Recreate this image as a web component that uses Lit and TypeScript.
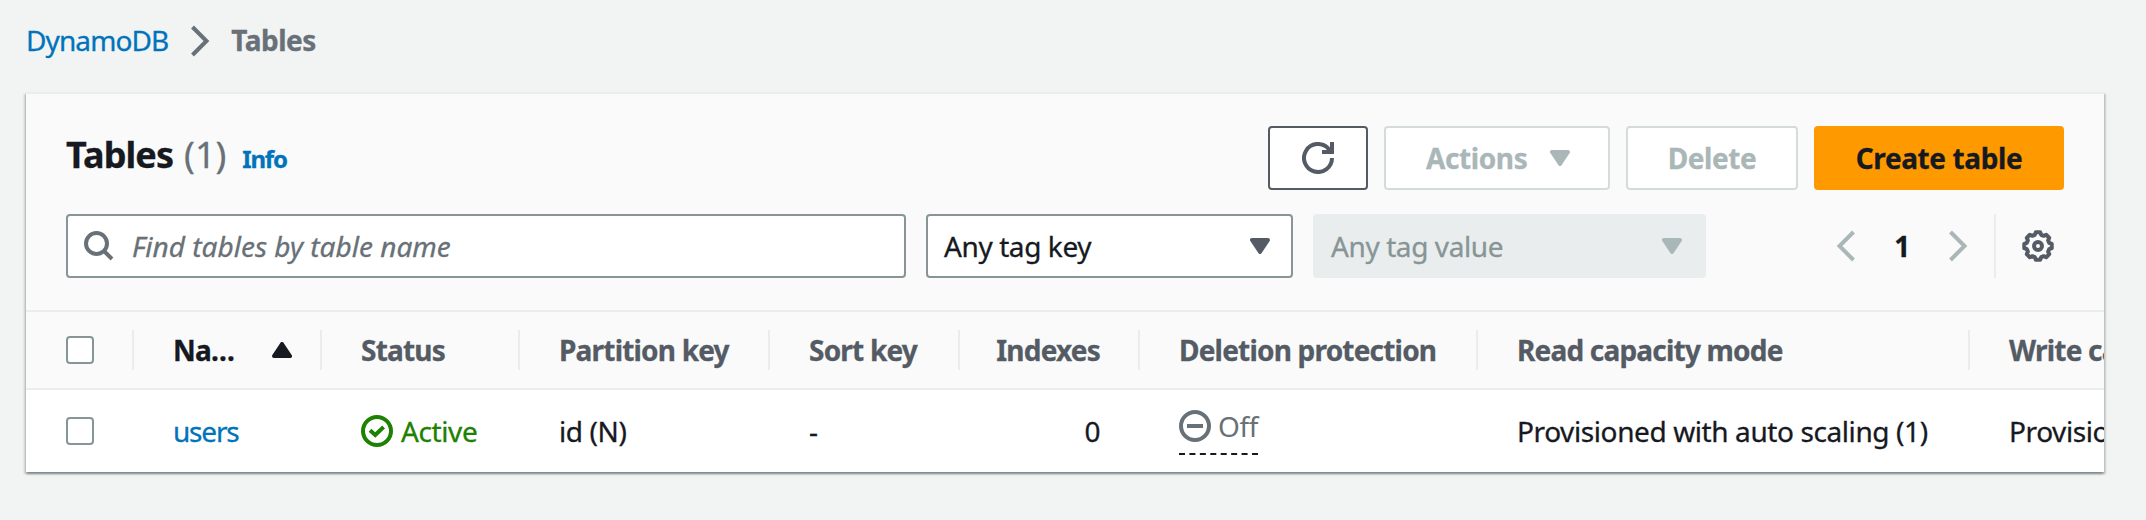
import { LitElement, html, svg, css, nothing } from "lit";
import { customElement } from "lit/decorators.js";
import { classMap } from "lit/directives/class-map.js";

const caret = (cls: string, up = false) => html`
  <svg class="icon ${cls}" width="20" height="16" viewBox="0 0 20 16">
    <path
      d=${up ? "M2 14L10 2L18 14Z" : "M2 2H18L10 14Z"}
      fill="currentColor" stroke="currentColor" stroke-width="4" stroke-linejoin="round"
    />
  </svg>`;

const chevron = (cls: string, left = false) => html`
  <svg class="icon ${cls}" width="20" height="32" viewBox="0 0 20 32">
    <path
      d=${left ? "M17.5 2L3.5 16L17.5 30" : "M2.5 2L16.5 16L2.5 30"}
      fill="none" stroke="currentColor" stroke-width="4"
    />
  </svg>`;

const refreshIcon = html`
  <svg class="icon" width="32" height="32" viewBox="0 0 32 32" fill="none" stroke="currentColor" stroke-width="4">
    <path d="M30 16A14 14 0 1 1 26 6.2L28.5 9.5" />
    <path d="M30 0V10H20" />
  </svg>`;

const searchIcon = html`
  <svg class="icon muted" width="30" height="30" viewBox="0 0 30 30" fill="none" stroke="currentColor" stroke-width="4">
    <circle cx="12.5" cy="12.5" r="10.5" />
    <path d="M19.5 19.5L28 28" />
  </svg>`;

/** Outline of an eight-toothed cog centred on 16,16. */
const cogPath = (() => {
  const at = (r: number, deg: number) => {
    const a = (deg * Math.PI) / 180;
    return `${(16 + r * Math.cos(a)).toFixed(2)} ${(16 + r * Math.sin(a)).toFixed(2)}`;
  };
  const parts: string[] = [];
  for (let k = 0; k < 8; k++) {
    const a = k * 45;
    parts.push(at(13.9, a - 9), at(13.9, a + 9), at(11.6, a + 16), at(11.6, a + 29));
  }
  return `M${parts.join("L")}Z`;
})();

const cogIcon = html`
  <svg class="icon slate" width="32" height="32" viewBox="0 0 32 32" fill="none" stroke="currentColor" stroke-width="4">
    <path d=${cogPath} stroke-linejoin="round" />
    <circle cx="16" cy="16" r="4" />
  </svg>`;

const statusIcon = (ok: boolean) => html`
  <svg class="icon" width="32" height="32" viewBox="0 0 32 32" fill="none" stroke="currentColor" stroke-width="4">
    <circle cx="16" cy="16" r="14" />
    ${ok ? svg`<path d="M9 15.3L14.2 20L22.6 12" />` : svg`<path d="M8 16H24" />`}
  </svg>`;

interface Column {
  title: string;
  cls?: string;
  sorted?: boolean;
  cell: unknown;
}

const columns: Column[] = [
  { title: "Na…", cls: "name", sorted: true, cell: html`<a class="link users">users</a>` },
  { title: "Status", cell: html`<span class="status ok">${statusIcon(true)}Active</span>` },
  { title: "Partition key", cell: "id (N)" },
  { title: "Sort key", cell: "-" },
  { title: "Indexes", cls: "right", cell: "0" },
  { title: "Deletion protection", cell: html`<span class="status off">${statusIcon(false)}Off</span>` },
  { title: "Read capacity mode", cell: "Provisioned with auto scaling (1)" },
  { title: "Write capacity mode", cls: "last", cell: "Provisioned with auto scaling (1)" },
];

@customElement("app-root")
export class AppRoot extends LitElement {
  static styles = css`
    :host {
      display: block;
      box-sizing: border-box;
      height: 520px;
      padding: 20px 42px 0 26px;
      background: #f2f3f3;
      color: #16191f;
      font: 28px/40px "Noto Sans", "Open Sans", sans-serif;
      letter-spacing: -0.4px;
      -webkit-text-stroke: 0.3px;
      overflow: hidden;
    }
    * { box-sizing: border-box; }
    .icon { display: block; flex: none; }
    .link { color: #0073bb; }
    .muted { color: #687078; }
    .slate { color: #545b64; }
    .faint { color: #aab7b8; }

    .crumbs { display: flex; align-items: center; height: 40px; letter-spacing: -0.9px; }
    .crumbs .icon { margin: 2px 21px 0 22px; }
    .crumbs b { color: #687078; letter-spacing: -0.5px; }

    .panel {
      margin-top: 32px;
      border-top: 2px solid #eaeded;
      background: #fff;
      box-shadow: 0 2px 2px rgba(0, 28, 36, 0.3), 2px 2px 2px rgba(0, 28, 36, 0.15),
        -2px 2px 2px rgba(0, 28, 36, 0.15);
    }
    .head {
      display: grid;
      gap: 24px;
      padding: 32px 40px;
      background: #fafafa;
      border-bottom: 2px solid #eaeded;
    }
    .bar { display: flex; align-items: center; height: 64px; }
    .title { display: flex; align-items: baseline; flex: 1; margin: 0; padding-bottom: 3px; font-size: 36px; letter-spacing: -0.9px; }
    .count { margin-left: 11px; font-weight: 400; letter-spacing: 0; color: #687078; }
    .info { margin-left: 16px; font-size: 24px; letter-spacing: -1.2px; }
    .buttons { display: flex; gap: 16px; }
    .btn {
      display: flex;
      align-items: center;
      justify-content: center;
      height: 64px;
      border: 2px solid #d5dbdb;
      border-radius: 4px;
      background: #fff;
      color: #aab7b8;
      font-weight: 700;
    }
    .refresh { width: 100px; border-color: #545b64; color: #545b64; }
    .actions { width: 226px; justify-content: space-between; padding: 0 38px 0 40px; }
    .delete { width: 172px; }
    .create { width: 250px; border-color: #ff9900; background: #ff9900; color: #16191f; }

    .field {
      display: flex;
      align-items: center;
      height: 64px;
      border: 2px solid #879596;
      border-radius: 4px;
      background: #fff;
    }
    .search { width: 840px; gap: 18px; padding-left: 16px; margin-right: 20px; color: #687078; font-style: italic; letter-spacing: 0; }
    .select { justify-content: space-between; padding: 0 21px 0 16px; }
    .key { width: 367px; margin-right: 20px; }
    .value { width: 393px; padding-right: 22px; background: #eaeded; border-color: #eaeded; color: #879596; }
    .pager { display: flex; align-items: center; justify-content: space-between; width: 132px; margin-left: auto; }
    .settings { display: flex; align-items: center; justify-content: flex-end; width: 70px; height: 64px; margin-left: 26px; padding-right: 10px; border-left: 2px solid #eaeded; }

    .clip { overflow: hidden; }
    .row {
      display: grid;
      grid-template-columns: 108px 188px 198px 250px 190px 180px 338px 492px 492px;
      width: 2436px;
    }
    .labels { height: 78px; background: #fafafa; border-bottom: 2px solid #eaeded; color: #545b64; font-weight: 700; letter-spacing: -0.8px; }
    .values { height: 82px; }
    .cell { display: flex; align-items: center; padding: 0 38px 0 39px; white-space: nowrap; }
    .select-cell { padding-left: 40px; }
    .labels .cell { height: 40px; margin-top: 18px; border-right: 2px solid #eaeded; }
    .labels .last { border-right: 0; }
    .labels .name { justify-content: space-between; padding-right: 28px; color: #16191f; }
    .right { justify-content: flex-end; }
    .values .right { padding-right: 40px; }
    .box { width: 28px; height: 28px; border: 2px solid #879596; border-radius: 4px; background: #fff; }
    .users { letter-spacing: -1.2px; }
    .status { display: flex; align-items: center; gap: 8px; }
    .ok { color: #1d8102; }
    .off {
      height: 48px;
      margin-top: 0;
      padding-bottom: 8px;
      gap: 7px;
      border-bottom: 2px dashed #16191f;
      color: #687078;
      -webkit-text-stroke: 0;
    }
  `;

  render() {
    return html`
      <nav class="crumbs"><a class="link">DynamoDB</a>${chevron("muted")}<b>Tables</b></nav>
      <section class="panel">
        <header class="head">
          <div class="bar">
            <h1 class="title">Tables<span class="count">(1)</span><a class="link info">Info</a></h1>
            <div class="buttons">
              <div class="btn refresh">${refreshIcon}</div>
              <div class="btn actions">Actions${caret("")}</div>
              <div class="btn delete">Delete</div>
              <div class="btn create">Create table</div>
            </div>
          </div>
          <div class="bar">
            <div class="field search">${searchIcon}<span>Find tables by table name</span></div>
            <div class="field select key">Any tag key${caret("slate")}</div>
            <div class="field select value">Any tag value${caret("faint")}</div>
            <div class="pager">${chevron("faint", true)}<b>1</b>${chevron("faint")}</div>
            <div class="settings">${cogIcon}</div>
          </div>
        </header>
        <div class="clip">
          <div class="row labels">
            <div class="cell select-cell"><span class="box"></span></div>
            ${columns.map(
              (c) => html`<div class=${classMap({ cell: true, [c.cls ?? "plain"]: true })}>
                <span>${c.title}</span>${c.sorted ? caret("", true) : nothing}
              </div>`
            )}
          </div>
          <div class="row values">
            <div class="cell select-cell"><span class="box"></span></div>
            ${columns.map(
              (c) => html`<div class=${classMap({ cell: true, [c.cls ?? "plain"]: true })}>${c.cell}</div>`
            )}
          </div>
        </div>
      </section>
    `;
  }
}
